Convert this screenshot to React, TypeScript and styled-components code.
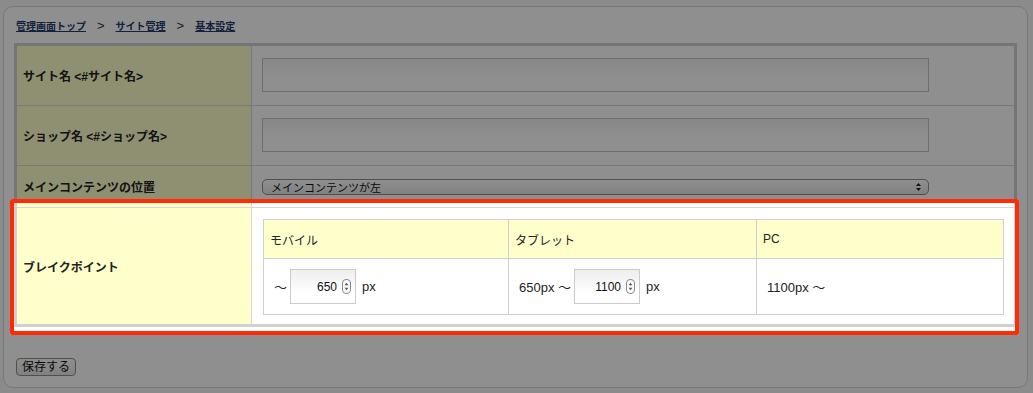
import styled, { createGlobalStyle } from 'styled-components';

const GlobalStyle = createGlobalStyle`
	html, body {
		margin: 0;
		padding: 0;
	}
	body {
		background: #f8f8f8;
		font-family: 'Liberation Sans', 'Noto Sans CJK JP', sans-serif;
		color: #222;
		overflow: hidden;
	}
`;

const Page = styled.div`
	height: 393px;
	box-sizing: border-box;
	padding: 6px 5px 0 3px;
`;

const Panel = styled.div`
	height: 382px;
	box-sizing: border-box;
	background: #fff;
	border: 1px solid #d4d4d4;
	border-radius: 10px;
	padding: 11px 10px 0 10px;
`;

const Breadcrumb = styled.div`
	display: flex;
	align-items: center;
	height: 14px;
	padding-left: 2px;
	margin-bottom: 11px;
	font-size: 10px;
	font-weight: bold;
`;

const Crumb = styled.a`
	color: #223b68;
	text-decoration: underline;
`;

const Sep = styled.span`
	margin: 0 11px;
	font-size: 13px;
	font-weight: normal;
	color: #333;
`;

const Table = styled.div`
	border: 3px solid #d0d0d0;
`;

const Row = styled.div<{ $highlight?: boolean }>`
	display: grid;
	grid-template-columns: 235px 1fr;
	border-bottom: 1px solid #d6d6d6;
	&:last-child {
		border-bottom: none;
	}
	${(p) =>
		p.$highlight &&
		`
		position: relative;
		&::after {
			content: '';
			position: absolute;
			top: -9px;
			left: -7px;
			right: -5px;
			bottom: -11px;
			border: 4px solid #ff2b06;
			border-radius: 2px;
			box-shadow: 0 0 0 3000px rgba(0, 0, 0, 0.44);
			z-index: 2;
			pointer-events: none;
		}
	`}
`;

const Label = styled.div`
	display: flex;
	align-items: center;
	padding-left: 6px;
	background: #ffffcc;
	border-right: 1px solid #d6d6d6;
	font-size: 12px;
	font-weight: bold;
	color: #222;
`;

const Value = styled.div<{ $pad: string }>`
	padding: ${(p) => p.$pad};
	background: #fff;
`;

const TextInput = styled.input`
	display: block;
	width: 667px;
	height: 34px;
	box-sizing: border-box;
	border: 1px solid #c2c2c2;
	background: linear-gradient(#f2f2f2, #fff 60%);
	outline: none;
`;

const SelectBox = styled.div`
	display: flex;
	align-items: center;
	justify-content: space-between;
	width: 667px;
	height: 16px;
	box-sizing: border-box;
	padding: 0 6px 0 8px;
	border: 1px solid #8f8f8f;
	border-radius: 5px;
	background: linear-gradient(#ffffff, #e6e6e6);
	font-size: 11px;
	color: #111;
`;

const Inner = styled.div`
	display: grid;
	grid-template-columns: 245px 248px 1fr;
	border-top: 1px solid #cfcfcf;
	border-left: 1px solid #cfcfcf;
`;

const Head = styled.div`
	display: flex;
	align-items: center;
	height: 38px;
	padding-left: 6px;
	background: #ffffcc;
	border-right: 1px solid #cfcfcf;
	border-bottom: 1px solid #cfcfcf;
	font-size: 12px;
	color: #222;
`;

const Cell = styled.div`
	display: flex;
	align-items: center;
	gap: 3px;
	height: 55px;
	padding-left: 10px;
	border-right: 1px solid #cfcfcf;
	border-bottom: 1px solid #cfcfcf;
	font-size: 13px;
	color: #222;
	white-space: pre;
`;

const Unit = styled.span`
	margin-left: 3px;
`;

const NumberBox = styled.div`
	display: flex;
	align-items: center;
	justify-content: flex-end;
	gap: 5px;
	width: 66px;
	height: 35px;
	box-sizing: border-box;
	padding-right: 4px;
	border: 1px solid #cbcbcb;
	background: linear-gradient(#eeeeee, #ffffff 70%);
`;

const NumberValue = styled.input`
	width: 40px;
	border: none;
	background: transparent;
	text-align: right;
	font-family: inherit;
	font-size: 12px;
	color: #111;
	padding: 0;
	outline: none;
`;

const Footer = styled.div`
	margin-top: 30px;
	padding-left: 2px;
`;

const SaveButton = styled.button`
	height: 18px;
	width: 60px;
	padding: 0;
	border: 1px solid #8e8e8e;
	border-radius: 4px;
	background: linear-gradient(#ffffff, #e6e6e6);
	font-family: inherit;
	font-size: 12px;
	color: #111;
	line-height: 16px;
`;

const Spinner = () => (
	<svg width="9" height="15" viewBox="0 0 9 15">
		<rect x="0.5" y="0.5" width="8" height="14" rx="3.5" fill="#fafafa" stroke="#8a8a8a" />
		<path d="M2.6 6.2 L4.5 3.8 L6.4 6.2 Z" fill="#555" />
		<path d="M2.6 8.8 L4.5 11.2 L6.4 8.8 Z" fill="#555" />
	</svg>
);

const SelectArrows = () => (
	<svg width="7" height="10" viewBox="0 0 7 10">
		<path d="M1 4 L3.5 1 L6 4 Z" fill="#222" />
		<path d="M1 6 L3.5 9 L6 6 Z" fill="#222" />
	</svg>
);

const App = () => {
	return (
		<>
			<GlobalStyle />
			<Page>
				<Panel>
					<Breadcrumb>
						<Crumb>管理画面トップ</Crumb>
						<Sep>&gt;</Sep>
						<Crumb>サイト管理</Crumb>
						<Sep>&gt;</Sep>
						<Crumb>基本設定</Crumb>
					</Breadcrumb>
					<Table>
						<Row>
							<Label>サイト名 &lt;#サイト名&gt;</Label>
							<Value $pad="12px 10px 13px">
								<TextInput type="text" />
							</Value>
						</Row>
						<Row>
							<Label>ショップ名 &lt;#ショップ名&gt;</Label>
							<Value $pad="12px 10px 13px">
								<TextInput type="text" />
							</Value>
						</Row>
						<Row>
							<Label>メインコンテンツの位置</Label>
							<Value $pad="13px 10px 12px">
								<SelectBox>
									<span>メインコンテンツが左</span>
									<SelectArrows />
								</SelectBox>
							</Value>
						</Row>
						<Row $highlight>
							<Label>ブレイクポイント</Label>
							<Value $pad="11px 10px 9px 11px">
								<Inner>
									<Head>モバイル</Head>
									<Head>タブレット</Head>
									<Head>PC</Head>
									<Cell>
										<span>〜</span>
										<NumberBox>
											<NumberValue defaultValue="650" />
											<Spinner />
										</NumberBox>
										<Unit>px</Unit>
									</Cell>
									<Cell>
										<span>650px 〜</span>
										<NumberBox>
											<NumberValue defaultValue="1100" />
											<Spinner />
										</NumberBox>
										<Unit>px</Unit>
									</Cell>
									<Cell>
										<span>1100px 〜</span>
									</Cell>
								</Inner>
							</Value>
						</Row>
					</Table>
					<Footer>
						<SaveButton>保存する</SaveButton>
					</Footer>
				</Panel>
			</Page>
		</>
	);
};

export default App;
